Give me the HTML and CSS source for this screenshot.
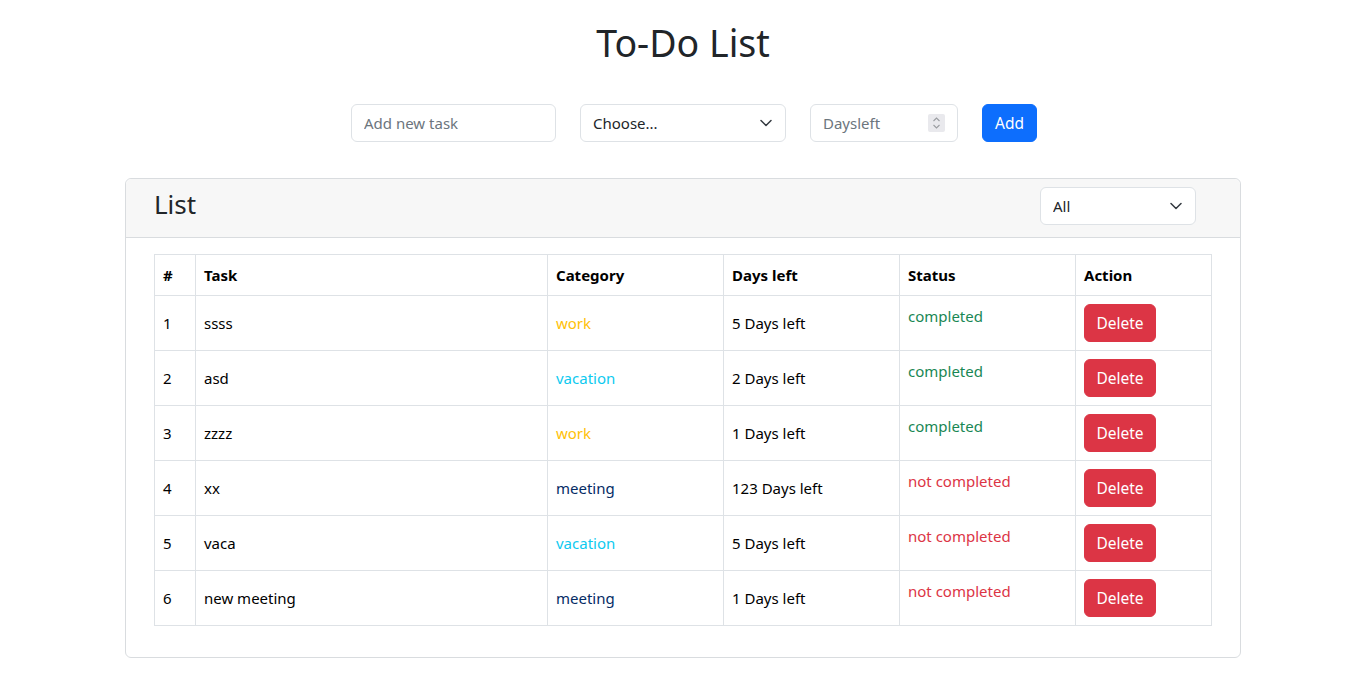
FILE: index.html
```html
<!DOCTYPE html>
<html lang="en">
<head>
<meta charset="utf-8">
<title>To-Do List</title>
<link rel="stylesheet" href="styles.css">
</head>
<body>
<h1 class="title">To-Do List</h1>
<form class="add-form">
  <input class="field field-task" type="text" placeholder="Add new task">
  <div class="select-wrap select-choose">
    <select class="field field-select"><option>Choose...</option></select>
    <svg class="chev" width="12" height="8" viewBox="0 0 12 8"><path d="M1 1.5l5 5 5-5" fill="none" stroke="#343a40" stroke-width="1.5" stroke-linecap="round" stroke-linejoin="round"/></svg>
  </div>
  <div class="num-wrap">
    <input class="field field-days" type="text" placeholder="Daysleft">
    <span class="spin"><svg width="9" height="14" viewBox="0 0 9 14"><path d="M1.5 5l3-3 3 3M1.5 9l3 3 3-3" fill="none" stroke="#9a9da1" stroke-width="1.1"/></svg></span>
  </div>
  <button type="button" class="btn btn-add">Add</button>
</form>
<div class="card">
  <div class="card-header">
    <h2 class="card-title">List</h2>
    <div class="select-wrap select-filter">
      <select class="field field-select"><option>All</option></select>
      <svg class="chev" width="12" height="8" viewBox="0 0 12 8"><path d="M1 1.5l5 5 5-5" fill="none" stroke="#343a40" stroke-width="1.5" stroke-linecap="round" stroke-linejoin="round"/></svg>
    </div>
  </div>
  <div class="card-body">
    <table class="table">
      <colgroup>
        <col class="c-num"><col class="c-task"><col class="c-cat"><col class="c-days"><col class="c-status"><col class="c-action">
      </colgroup>
      <thead>
        <tr><th>#</th><th>Task</th><th>Category</th><th>Days left</th><th>Status</th><th>Action</th></tr>
      </thead>
      <tbody>
        <tr><td>1</td><td>ssss</td><td class="cat-work">work</td><td>5 Days left</td><td class="status done">completed</td><td><button type="button" class="btn btn-del">Delete</button></td></tr>
        <tr><td>2</td><td>asd</td><td class="cat-vac">vacation</td><td>2 Days left</td><td class="status done">completed</td><td><button type="button" class="btn btn-del">Delete</button></td></tr>
        <tr><td>3</td><td>zzzz</td><td class="cat-work">work</td><td>1 Days left</td><td class="status done">completed</td><td><button type="button" class="btn btn-del">Delete</button></td></tr>
        <tr><td>4</td><td>xx</td><td class="cat-meet">meeting</td><td>123 Days left</td><td class="status notdone">not completed</td><td><button type="button" class="btn btn-del">Delete</button></td></tr>
        <tr><td>5</td><td>vaca</td><td class="cat-vac">vacation</td><td>5 Days left</td><td class="status notdone">not completed</td><td><button type="button" class="btn btn-del">Delete</button></td></tr>
        <tr><td>6</td><td>new meeting</td><td class="cat-meet">meeting</td><td>1 Days left</td><td class="status notdone">not completed</td><td><button type="button" class="btn btn-del">Delete</button></td></tr>
      </tbody>
    </table>
  </div>
</div>
</body>
</html>
```
FILE: styles.css
```css
* { box-sizing: border-box; }
body {
  margin: 0;
  font-family: "Noto Sans", "Open Sans", sans-serif;
  font-size: 15px;
  line-height: 24px;
  color: #212529;
  background: #fff;
}
.title {
  margin: 19px 0 37px;
  text-align: center;
  font-weight: 400;
  font-size: 37.5px;
  line-height: 48px;
}
.add-form {
  display: flex;
  justify-content: center;
  gap: 24px;
  padding-left: 22px;
  margin: 0 0 36px;
}
.field {
  font-family: inherit;
  font-size: 15px;
  color: #212529;
  height: 38px;
  border: 1px solid #dee2e6;
  border-radius: 6px;
  padding: 6px 12px;
  background: #fff;
  outline: none;
}
.field::placeholder { color: #6c757d; opacity: 1; }
.field-task { width: 205px; }
.select-wrap { position: relative; }
.field-select {
  appearance: none;
  -webkit-appearance: none;
  width: 100%;
  padding-right: 36px;
}
.chev { position: absolute; right: 14px; top: 15px; pointer-events: none; }
.select-choose { width: 206px; }
.num-wrap { position: relative; width: 148px; }
.field-days { width: 100%; }
.spin {
  position: absolute;
  right: 13px;
  top: 10px;
  width: 17px;
  height: 18px;
  background: #e9e9ed;
  border-radius: 2px;
  display: flex;
  align-items: center;
  justify-content: center;
}
.btn {
  font-family: inherit;
  font-size: 15.5px;
  line-height: 24px;
  border: 1px solid transparent;
  border-radius: 6px;
  padding: 6px 12px;
  color: #fff;
  cursor: pointer;
  height: 38px;
}
.btn-add { background: #0d6efd; border-color: #0d6efd; width: 55px; padding: 6px 0; }
.btn-del { background: #dc3545; border-color: #dc3545; width: 72px; padding: 6px 0; }
.card {
  width: 1116px;
  margin: 0 auto;
  border: 1px solid #d9dcdf;
  border-radius: 6px;
}
.card-header {
  height: 59px;
  background: #f7f7f7;
  border-bottom: 1px solid #d9dcdf;
  border-radius: 6px 6px 0 0;
  display: flex;
  align-items: center;
  justify-content: space-between;
  padding: 0 44px 0 28px;
}
.card-title {
  margin: 0 0 8px;
  font-weight: 400;
  font-size: 26px;
  line-height: 32px;
}
.select-filter { width: 156px; margin-bottom: 5px; }
.card-body { padding: 16px 28px 31px; }
.table {
  width: 1057px;
  border-collapse: collapse;
  table-layout: fixed;
}
.c-num { width: 41px; }
.c-task { width: 352px; }
.c-cat { width: 176px; }
.c-days { width: 176px; }
.c-status { width: 176px; }
.c-action { width: 136px; }
.table th, .table td {
  border: 1px solid #dee2e6;
  padding: 8px;
  text-align: left;
  vertical-align: middle;
  color: #000;
}
.table th { font-weight: 700; }
.table td.status { vertical-align: top; }
.table td.cat-work { color: #ffc107; }
.table td.cat-vac { color: #0dcaf0; }
.table td.cat-meet { color: #052c65; }
.table td.done { color: #198754; }
.table td.notdone { color: #dc3545; }
```
